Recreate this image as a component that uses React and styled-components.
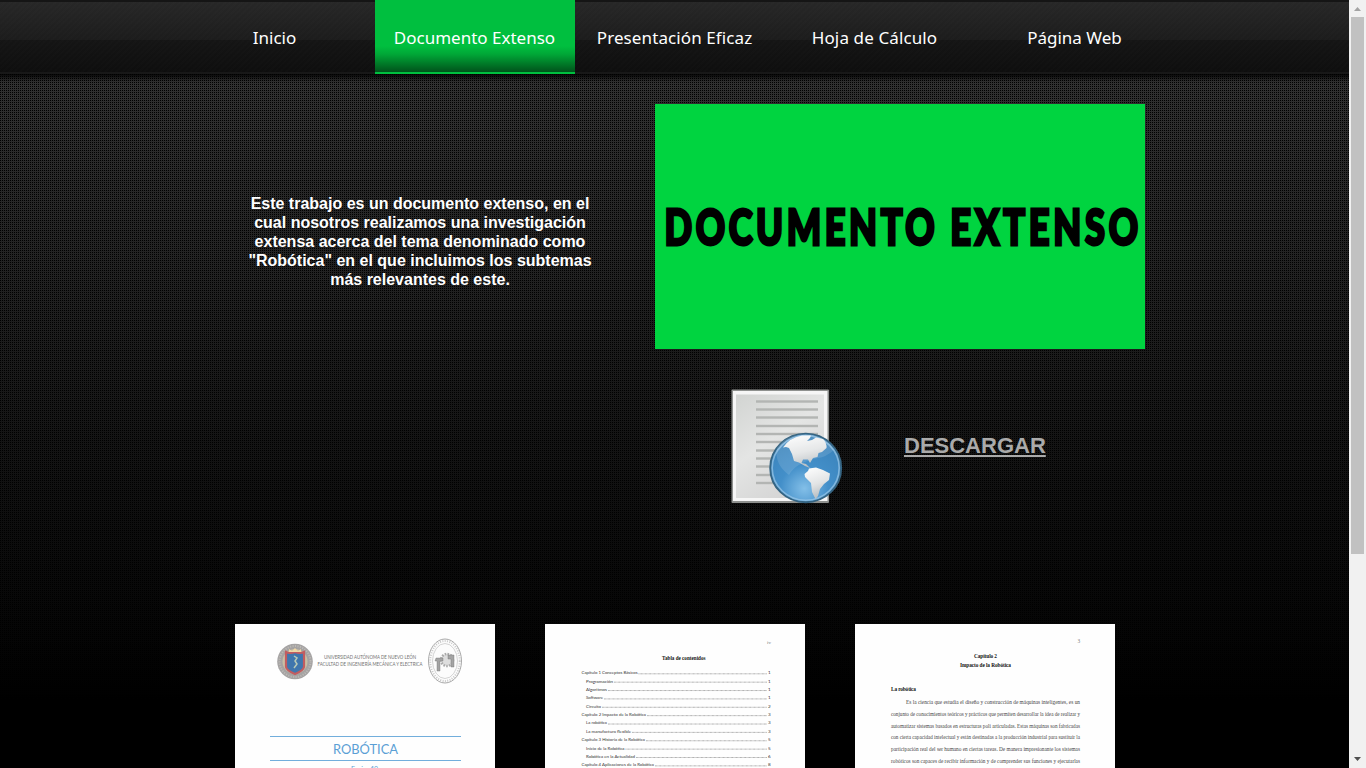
import React from "react";
import styled, { createGlobalStyle } from "styled-components";

const Global = createGlobalStyle`
  * { box-sizing: border-box; }
  html, body { margin: 0; padding: 0; background: #000; overflow: hidden; }
`;

const Screen = styled.div`
  display: flex;
  width: 1366px;
  height: 768px;
  overflow: hidden;
  font-family: "Liberation Sans", Arial, sans-serif;
`;

const Page = styled.main`
  flex: 0 0 1349px;
  height: 768px;
  overflow: hidden;
  background:
    linear-gradient(rgba(0,0,0,.85) 74px, rgba(0,0,0,0) 82px),
    linear-gradient(rgba(0,0,0,0) 80px, #000 700px),
    conic-gradient(#303030 75%, #000 0) 0 0 / 2px 2px;
`;

const Header = styled.header`
  height: 74px;
  display: flex;
  justify-content: center;
  border-bottom: 2px solid #181818;
  background:
    linear-gradient(#151515 2px, transparent 2px),
    repeating-linear-gradient(135deg, rgba(255,255,255,.008) 0 2px, transparent 2px 4px),
    linear-gradient(#282828 0, #1c1c1c 40px, #151515 40px, #0e0e0e 72px);
`;

const Nav = styled.nav`
  display: flex;
  height: 74px;
`;

const NavItem = styled.a`
  width: 200px;
  height: 74px;
  line-height: 76px;
  text-align: center;
  color: #fff;
  font-family: "Noto Sans", sans-serif;
  font-size: 17px;
  letter-spacing: ${(p) => p.$track || 0}px;
  border-bottom: ${(p) => (p.$active ? "2px solid #00bf3f" : "0")};
  background: ${(p) => (p.$active ? "linear-gradient(#00bf3f 46px, #00a837 54px, #00531b 72px)" : "none")};
`;

const Hero = styled.section`
  width: 910px;
  height: 550px;
  margin: 0 0 0 235px;
  padding-top: 30px;
  display: flex;
  align-items: flex-start;
`;

const Intro = styled.p`
  flex: 0 0 370px;
  margin: 90px 50px 0 0;
  color: #fff;
  font-size: 16px;
  font-weight: bold;
  line-height: 19px;
  text-align: center;
  white-space: nowrap;
`;

const Side = styled.div`
  flex: 0 0 490px;
`;

const Banner = styled.div`
  width: 490px;
  height: 245px;
  background: #00d440;
  svg { display: block; }
`;

const Download = styled.div`
  display: flex;
  align-items: center;
  margin-top: 31px;
  padding-left: 65px;
  svg { display: block; }
`;

const DownloadLink = styled.a`
  margin: 0 0 3px 59px;
  color: #aaa;
  font-size: 22px;
  font-weight: bold;
  line-height: 26px;
  text-decoration: underline;
`;

const Gallery = styled.section`
  display: flex;
  gap: 50px;
  padding-left: 235px;
`;

const Thumb = styled.div`
  width: 260px;
  height: 144px;
  background: #fefefe;
  overflow: hidden;
  svg { display: block; }
`;

const Scrollbar = styled.aside`
  flex: 0 0 17px;
  height: 768px;
  background: #f1f1f1;
  display: flex;
  flex-direction: column;
  align-items: center;
`;

const ArrowBox = styled.div`
  height: 17px;
  svg { display: block; }
`;

const Handle = styled.div`
  width: 13px;
  height: 537px;
  margin-bottom: auto;
  background: #c1c1c1;
`;

function BannerTitle() {
  return (
    <svg width="490" height="245" viewBox="0 0 490 245" fontFamily="Lato, sans-serif" fontWeight="900" fontSize="49">
      <g transform="scale(.74 1)" stroke="#000" strokeWidth="3" strokeLinejoin="miter">
        <text x="13" y="141" textLength="365">DOCUMENTO</text>
        <text x="399" y="141" textLength="254">EXTENSO</text>
      </g>
    </svg>
  );
}

function DocumentIcon() {
  const lines = [21, 29, 37, 45.5, 53.5, 61.5, 70, 78, 86, 94.5, 102.5];
  return (
    <svg width="125" height="135" viewBox="0 0 125 135">
      <defs>
        <linearGradient id="paper" x1="0" y1="0" x2="0.6" y2="1">
          <stop offset="0" stopColor="#d2d4d2" />
          <stop offset="0.5" stopColor="#e4e5e4" />
          <stop offset="1" stopColor="#d4d4d4" />
        </linearGradient>
        <radialGradient id="sea" cx="0.48" cy="0.8" r="0.75">
          <stop offset="0" stopColor="#83bfe8" />
          <stop offset="0.45" stopColor="#438fc9" />
          <stop offset="1" stopColor="#3a83bb" />
        </radialGradient>
        <linearGradient id="land" x1="0" y1="0" x2="0.3" y2="1">
          <stop offset="0" stopColor="#fff" />
          <stop offset="0.6" stopColor="#e2e4e5" />
          <stop offset="1" stopColor="#b9bfc3" />
        </linearGradient>
      </defs>
      <rect x="11.5" y="9.500" width="97.5" height="113.5" rx="1" fill="#8f918f" />
      <rect x="13" y="11" width="94.5" height="110" fill="#f6f6f6" />
      <rect x="16" y="14.500" width="88" height="103.5" fill="url(#paper)" />
      {lines.map((y) => <rect key={y} x="36" y={y - 0.7} width="62" height="2.4" fill="#b3b5b3" />)}
      <ellipse cx="85.700" cy="87.900" rx="35.500" ry="34.300" fill="url(#sea)" stroke="#356482" strokeWidth="1.900" />
      <ellipse cx="85.700" cy="87.900" rx="33.500" ry="32.300" fill="none" stroke="#9cc9e8" strokeOpacity=".7" strokeWidth="1.600" />
      <path d="M63 67.500 Q69 58 82 55.500 L91 55.500 L90 58 L87 61 L92 60 L96 57.500 L103 59 Q107 63 106.500 68 L102 72 L98.500 73 L97.500 77 L93 78 L90 83 L88 79.500 L83 79.500 L81.500 83 L86 84 L90 88 L85 86 L79 82.500 L74 81 L72 74 L69 68 L66 67Z" fill="url(#land)" />
      <path d="M89 88.500 L96 87.500 L103 90 L110 93.500 L109 100 L104 104 L100 109 L98 116 L95.500 119 L92 112 L91 103 L85 97 L84.500 94 L88 91Z" fill="url(#land)" />
      <path d="M57 68 Q67 54 85.800 54 Q106 55 114 70 Q106 77 98 78 Q75 83 69 95 Q54 84 57 68Z" fill="#fff" opacity=".12" />
    </svg>
  );
}

function CoverPage() {
  return (
    <svg width="260" height="144" viewBox="0 0 260 144">
      <circle cx="60" cy="37.500" r="17.800" fill="#a5a3a3" />
      <circle cx="60" cy="37.500" r="15.500" fill="none" stroke="#bcb9b5" strokeWidth="2" strokeDasharray="1.200 1.300" />
      <circle cx="60" cy="37.500" r="12.500" fill="#c9bfa4" />
      <path d="M51 28 Q55 30 60 28 Q65 30 69 28 V43 Q68 47 60 50 Q52 47 51 43Z" fill="#4076ad" stroke="#c25c60" strokeWidth="2.200" />
      <path d="M54 25 L57 27 L60 24 L63 27 L66 25 V28 H54Z" fill="#f0d7a5" />
      <path d="M59 32 L62 34 L60 37 L62 40 L59 44" fill="none" stroke="#b7c9b7" strokeWidth="1.500" />
      <g fontFamily="Lato, sans-serif" fill="#707070" fontSize="5">
        <text x="89" y="34.700" textLength="92" lengthAdjust="spacingAndGlyphs">UNIVERSIDAD AUTÓNOMA DE NUEVO LEÓN</text>
        <text x="82.500" y="41.500" textLength="105" lengthAdjust="spacingAndGlyphs">FACULTAD DE INGENIERÍA MECÁNICA Y ELECTRICA</text>
      </g>
      <ellipse cx="210" cy="37" rx="16.500" ry="22" fill="#fcfcfc" stroke="#a9a9a9" strokeWidth="1" />
      <ellipse cx="210" cy="37" rx="14.800" ry="20" fill="none" stroke="#c8c8c8" strokeWidth="2" strokeDasharray="1 1.400" />
      <ellipse cx="210" cy="37" rx="12.500" ry="17.500" fill="none" stroke="#b9b9b9" strokeWidth=".6" />
      <circle cx="212" cy="36" r="6" fill="#ddd" stroke="#aaa" strokeWidth="2.500" strokeDasharray="1.600 1.200" />
      <path d="M201 34 H208 V37 H205 V47 H202 V37 H200Z M213 31 H219 V43 H216 V35 H213Z" fill="#a4a4a4" stroke="#777" strokeWidth=".4" />
      <path d="M35 112.500 H226 M35 136.500 H226" stroke="#72aedc" strokeWidth="1" />
      <text x="98" y="129.500" fontFamily="Lato, sans-serif" fontSize="14" fill="#5b9fd5" textLength="65" lengthAdjust="spacingAndGlyphs">ROBÓTICA</text>
      <text x="116" y="148" fontFamily="Lato, sans-serif" fontSize="7" fill="#5b9fd5" textLength="27">Equipo 10</text>
    </svg>
  );
}

const contents = [
  ["Capítulo 1 Conceptos Básicos", 36.5, 56, "1"],
  ["Programación", 41, 27, "1"],
  ["Algoritmos", 41, 21, "1"],
  ["Software", 41, 17, "1"],
  ["Circuito", 41, 15, "2"],
  ["Capítulo 2 Impacto de la Robótica", 36.5, 64.5, "3"],
  ["La robótica", 41, 21, "3"],
  ["La manufactura flexible", 41, 45, "3"],
  ["Capítulo 3 Historia de la Robótica", 36.5, 63.5, "5"],
  ["Inicio de la Robótica", 41, 38.5, "5"],
  ["Robótica en la Actualidad", 41, 49, "6"],
  ["Capítulo 4 Aplicaciones de la Robótica", 36.5, 72.5, "8"],
];

function ContentsPage() {
  return (
    <svg width="260" height="144" viewBox="0 0 260 144" fontFamily="Lato, sans-serif" fontSize="4.600" fill="#333">
      <text x="222" y="20" fontSize="5" fill="#777" fontFamily="Liberation Serif, serif" textLength="4">iv</text>
      <text x="117" y="35.500" fontSize="5.600" fontWeight="bold" fill="#111" fontFamily="Liberation Serif, serif" textLength="43.500" lengthAdjust="spacingAndGlyphs">Tabla de contenidos</text>
      {contents.map(([label, x, w, n], i) => {
        const y = 50.2 + i * 8.37;
        return (
          <g key={label}>
            <text x={x} y={y} textLength={w} lengthAdjust="spacingAndGlyphs">{label}</text>
            <path d={`M${x + w + 1} ${y - 0.4} H222`} stroke="#888" strokeWidth=".8" strokeDasharray=".8 .5" />
            <text x="223" y={y}>{n}</text>
          </g>
        );
      })}
    </svg>
  );
}

const paragraph = [
  ["Es la ciencia que estudia el diseño y construcción de máquinas inteligentes, es un", 51, 174],
  ["conjunto de conocimientos teóricos y prácticos que permiten desarrollar la idea de realizar y", 36, 189],
  ["automatizar sistemas basados en estructuras poli articuladas. Estas máquinas son fabricadas", 36, 189],
  ["con cierta capacidad intelectual y están destinadas a la producción industrial para sustituir la", 36, 189],
  ["participación real del ser humano en ciertas tareas. De manera impresionante los sistemas", 36, 189],
  ["robóticos son capaces de recibir información y de comprender sus funciones y ejecutarlas", 36, 189],
];

function ChapterPage() {
  return (
    <svg width="260" height="144" viewBox="0 0 260 144" fontFamily="Liberation Serif, serif" fontSize="5.300" fill="#444">
      <text x="222.500" y="19" fill="#777">3</text>
      <g fontWeight="bold" fill="#111">
        <text x="119" y="34" textLength="23">Capítulo 2</text>
        <text x="105" y="43" textLength="51">Impacto de la Robótica</text>
        <text x="36" y="67.300" textLength="25">La robótica</text>
      </g>
      {paragraph.map(([line, x, w], i) => (
        <text key={line} x={x} y={79.7 + i * 11.9} textLength={w} lengthAdjust="spacingAndGlyphs">{line}</text>
      ))}
    </svg>
  );
}

export default function App() {
  return (
    <Screen>
      <Global />
      <Page>
        <Header>
          <Nav>
            <NavItem>Inicio</NavItem>
            <NavItem $active>Documento Extenso</NavItem>
            <NavItem $track={0.1}>Presentación Eficaz</NavItem>
            <NavItem $track={0.12}>Hoja de Cálculo</NavItem>
            <NavItem>Página Web</NavItem>
          </Nav>
        </Header>
        <Hero>
          <Intro>
            Este trabajo es un documento extenso, en el<br />
            cual nosotros realizamos una investigación<br />
            extensa acerca del tema denominado como<br />
            "Robótica" en el que incluimos los subtemas<br />
            más relevantes de este.
          </Intro>
          <Side>
            <Banner><BannerTitle /></Banner>
            <Download>
              <DocumentIcon />
              <DownloadLink>DESCARGAR</DownloadLink>
            </Download>
          </Side>
        </Hero>
        <Gallery>
          <Thumb><CoverPage /></Thumb>
          <Thumb><ContentsPage /></Thumb>
          <Thumb><ChapterPage /></Thumb>
        </Gallery>
      </Page>
      <Scrollbar>
        <ArrowBox>
          <svg width="17" height="17"><path d="M5 11 H12 L8.500 7Z" fill="#a3a3a3" /></svg>
        </ArrowBox>
        <Handle />
        <ArrowBox>
          <svg width="17" height="17"><path d="M5 6 H12 L8.500 10Z" fill="#505050" /></svg>
        </ArrowBox>
      </Scrollbar>
    </Screen>
  );
}
